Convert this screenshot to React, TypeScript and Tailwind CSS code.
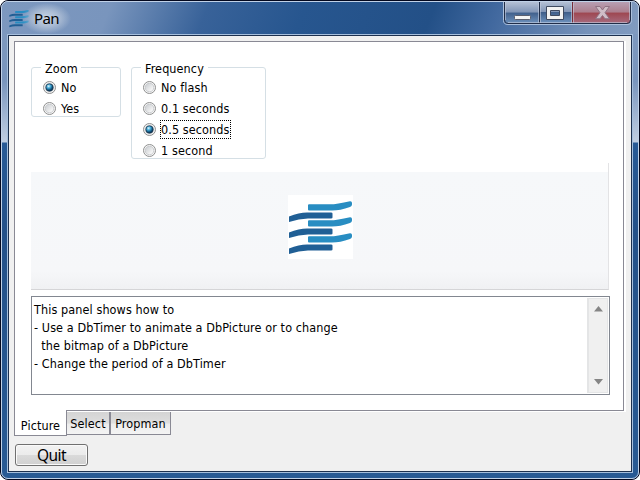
import React from "react";

function Stripes({ className }: { className: string }) {
  return (
    <svg className={className} viewBox="0 0 65 64" preserveAspectRatio="none">
      {[0, 16, 32].map((y) => (
        <g key={y} transform={`translate(0 ${y})`}>
          <path d="M21 9.300H42Q49 9.300 62 6.200Q64 6 64 8V9.500Q64 11.300 62 12Q52 15.500 44 15.500H21Q20 15.500 20 14.500V10.500Q20 9.300 21 9.300Z" fill="#288dc2" />
          <path d="M1 21.500Q11 17.400 19 17.400H43Q44.500 17.400 44.500 18.500V22.500Q44.500 23.600 43 23.600H20Q11 23.700 1 27Z" fill="#205f95" />
        </g>
      ))}
    </svg>
  );
}

function Radio({ on }: { on?: boolean }) {
  return (
    <svg className="h-[13px] w-[13px] shrink-0" viewBox="0 0 13 13">
      <defs>
        <linearGradient id="well" x1="0" y1="0" x2="1" y2="1">
          <stop offset="0" stopColor="#c6cace" />
          <stop offset="0.8" stopColor="#f7f7f7" />
        </linearGradient>
        <radialGradient id="dot" cx="0.38" cy="0.32" r="0.7">
          <stop offset="0" stopColor="#e4f9ff" />
          <stop offset="0.35" stopColor="#4bb0dc" />
          <stop offset="0.7" stopColor="#125a84" />
          <stop offset="1" stopColor="#0b2444" />
        </radialGradient>
      </defs>
      <circle cx="6.5" cy="6.500" r="6" fill="#f6f6f6" stroke="#8e8f8f" />
      <circle cx="6.5" cy="6.500" r="4.300" fill="url(#well)" stroke="#c0c3c6" strokeWidth="0.8" />
      {on && <circle cx="6.5" cy="6.500" r="3.700" fill="url(#dot)" stroke="#17374f" strokeWidth="0.7" />}
    </svg>
  );
}

function Group({ title, options, selected, focused, className, legendClass }: {
  title: string; options: string[]; selected: number; focused?: boolean; className: string; legendClass: string;
}) {
  return (
    <div className={`rounded-[3px] border border-[#d5dfe5] ${className}`}>
      <div className={`-mt-[8px] ml-[9px] h-[14px] bg-white pl-1 leading-[18px] ${legendClass}`}>{title}</div>
      <div className="mt-[3px] pl-[11px]">
        {options.map((o, i) => (
          <div key={o} className="flex h-[21px] items-center">
            <Radio on={i === selected} />
            <span className={`ml-[4px] h-[19px] border border-dotted pt-px leading-[15px] ${focused && i === selected ? "border-black" : "border-transparent"}`}>{o}</span>
          </div>
        ))}
      </div>
    </div>
  );
}

function Caption() {
  return (
    <svg className="mr-[4px] h-[27px] w-[131px]" viewBox="0 0 131 27">
      <defs>
        <linearGradient id="glass" x1="0" y1="0" x2="0" y2="1">
          <stop offset="0" stopColor="#b4c0d5" />
          <stop offset="0.48" stopColor="#8094b5" />
          <stop offset="0.5" stopColor="#405f8b" />
          <stop offset="1" stopColor="#6f93be" />
        </linearGradient>
        <linearGradient id="red" x1="0" y1="0" x2="0" y2="1">
          <stop offset="0" stopColor="#b89fb3" />
          <stop offset="0.48" stopColor="#ac7e8d" />
          <stop offset="0.5" stopColor="#9e4650" />
          <stop offset="1" stopColor="#a76c80" />
        </linearGradient>
      </defs>
      <path d="M0.500 0V18.500Q0.500 22.500 5 22.500H124Q128.500 22.500 128.500 18.500V0" fill="none" stroke="#acc0dc" />
      <path d="M1.500 0V18Q1.500 21.500 5 21.500H36V0Z" fill="url(#glass)" />
      <rect x="36" width="33" height="21" fill="url(#glass)" />
      <path d="M69 0V21.500H124Q127.500 21.500 127.500 18V0Z" fill="url(#red)" />
      <path d="M1.500 0V18Q1.500 21.500 5 21.500H124Q127.500 21.500 127.500 18V0M36.500 0V21" fill="none" stroke="#202d48" />
      <path d="M69.500 0V21" stroke="#762d39" />
      <path d="M2.500 0V18M35.500 1V21M37.500 1V21M68.500 1V21M70.500 1V21M126.500 0V18M5 20.500H124" fill="none" stroke="#c4cde0" strokeOpacity="0.6" />
      <rect x="11.500" y="13.500" width="16" height="4" rx="1" fill="#f4f4f4" stroke="#5b5f6e" />
      <path fillRule="evenodd" d="M43.500 4.500H60.500V17.500H43.500ZM47.500 8.500V13.500H56.500V8.500Z" fill="#f2f2f2" stroke="#3f4a60" />
      <path d="M92.500 4.500H97L99.500 8L102 4.500H106.500L102 10.700L106.500 16.800H102L99.500 13.500L97 16.800H92.500L97 10.700Z" fill="#d0bdc7" stroke="#8e7283" />
    </svg>
  );
}

export default function App() {
  return (
    <div className="h-[480px] w-[640px] overflow-hidden bg-white [font-family:'DejaVu_Sans_Condensed','DejaVu_Sans',sans-serif] text-[12.5px] tracking-[0.1px] text-black [font-stretch:condensed]">
      <div className="h-[480px] rounded-[8px] border border-[#03081e] bg-[linear-gradient(180deg,#809abf_0,#7995bd_80px,#c0cee2_141px,#285a96_142px,#245189_230px,#285a94_100%)]">
        <div className="flex h-[478px] flex-col rounded-[7px] border border-[#c0d1e7]">
          <div className="flex h-[32px] shrink-0 items-start rounded-t-[6px] bg-[linear-gradient(112deg,#7d98bf_0,#7995bd_17%,#386299_32%,#27568f_47%,#235087_67%,#42699f_77%,#7692b9_92%,#819bc0_100%)]">
            <div className="flex h-[32px] items-center">
              <Stripes className="ml-[7px] h-[21px] w-[20px]" />
              <span className="-ml-[7px] bg-[radial-gradient(closest-side,#c9d5e6_0,#c3cfdfaa_50%,transparent_100%)] px-[12px] [font-family:'Noto_Sans',sans-serif] text-[15px] leading-[31px] tracking-[-0.6px] [font-stretch:normal]">Pan</span>
            </div>
            <div className="flex-1" />
            <Caption />
          </div>
          <div className="mx-[5px] h-[439px] border border-[#a6bfdd]">
            <div className="flex h-[437px] flex-col border border-[#1d304e] bg-[#f0f0f0] pl-[5px] pt-[5px]">
              <div className="h-[371px] w-[612px] shrink-0 border-b border-r-2 border-white">
                <div className="h-[370px] w-[610px] border border-[#898994] bg-white pl-4 pt-[25px]">
                  <div className="flex h-[96px] items-start gap-[10px]">
                    <Group title="Zoom" options={["No", "Yes"]} selected={0} className="h-[50px] w-[90px]" legendClass="w-[40px]" />
                    <Group title="Frequency" options={["No flash", "0.1 seconds", "0.5 seconds", "1 second"]} selected={2} focused className="h-[92px] w-[135px]" legendClass="w-[67px]" />
                  </div>
                  <div className="h-[127px] w-[578px] border-b border-r border-b-[#d5d5d7] border-r-[#e3e3e5] pt-[9px]">
                    <div className="flex h-[117px] justify-center bg-[linear-gradient(#f6f8fa_0,#f6f7f9_85%,#f0f1f3_100%)] pt-[23px] pl-px">
                      <Stripes className="h-[64px] w-[65px] bg-white" />
                    </div>
                  </div>
                  <div className="mt-[6px] flex h-[99px] w-[579px] border border-[#828790] py-px pl-[2px] pr-px">
                    <div className="flex-1 whitespace-pre pt-[3px] leading-[18px]">
                      {"This panel shows how to\n- Use a DbTimer to animate a DbPicture or to change\n  the bitmap of a DbPicture\n- Change the period of a DbTimer"}
                    </div>
                    <div className="flex w-[21px] flex-col items-center justify-between border border-l-2 border-[#e4e5e6] bg-[#f0f0f0] py-[7px]">
                      <svg className="h-[6px] w-[9px]" viewBox="0 0 9 6"><path d="M4.500 0L9 5.500H0Z" fill="#858585" /></svg>
                      <svg className="h-[6px] w-[9px]" viewBox="0 0 9 6"><path d="M4.500 5.500L9 0H0Z" fill="#858585" /></svg>
                    </div>
                  </div>
                </div>
              </div>
              <div className="-mt-px flex h-[25px] shrink-0 items-start">
                <div className="relative -mt-px h-[26px] w-[53px] border border-t-0 border-[#898994] bg-white text-center leading-[32px]">Picture</div>
                <div className="mt-px h-[23px] w-[43px] border border-l-0 border-t-0 border-[#898994] bg-[linear-gradient(#d4d4d4_0,#dedede_50%,#ececec_55%,#f4f4f4_100%)] text-center leading-[23px]">Select</div>
                <div className="mt-px h-[23px] w-[61px] border border-t-0 border-[#898994] bg-[linear-gradient(#d4d4d4_0,#dedede_50%,#ececec_55%,#f4f4f4_100%)] text-center leading-[23px]">Propman</div>
              </div>
              <div className="ml-px mt-[8px] h-[22px] w-[73px] rounded-[3px] border border-[#707070] bg-[linear-gradient(#f2f2f2_0,#ebebeb_50%,#dadada_51%,#d0d0d0_100%)] text-center [font-family:'Noto_Sans',sans-serif] text-[15.5px] leading-[20px] tracking-[-0.6px] shadow-[inset_0_0_0_1px_#fafafa] [font-stretch:normal]">Quit</div>
            </div>
          </div>
        </div>
      </div>
    </div>
  );
}
